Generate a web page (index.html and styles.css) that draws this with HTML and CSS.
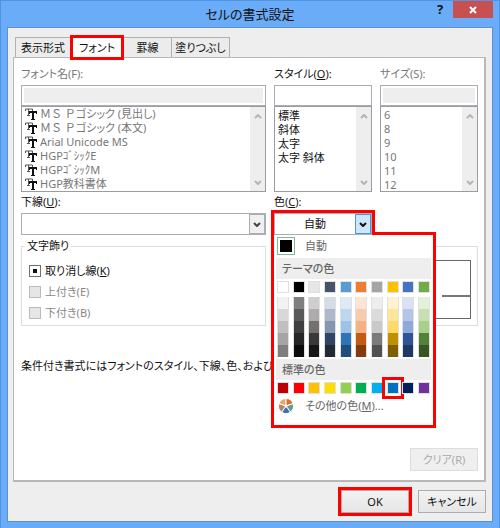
FILE: index.html
```
<!DOCTYPE html>
<html lang="ja">
<head>
    <meta charset="UTF-8">
    <meta name="viewport" content="width=device-width, initial-scale=1.0">
    <title>セルの書式設定</title>
    <link rel="stylesheet" href="styles.css">
</head>
<body>
    <svg width="0" height="0" class="defs" aria-hidden="true">
        <symbol id="tt" viewBox="0 0 12 12">
            <path d="M.5 3V1h7v2M3.5 1v6M2 7.5h3" fill="none" stroke="#555" stroke-width="1"/>
            <path d="M4 3h8v3h-1V5H9v6h1v1H6v-1h1V5H5v1H4z" fill="#111"/>
        </symbol>
        <symbol id="up" viewBox="0 0 8 5"><path d="M1 4l3-3 3 3" fill="none" stroke="#b4b4b4" stroke-width="2"/></symbol>
        <symbol id="down" viewBox="0 0 8 5"><path d="M1 1l3 3 3-3" fill="none" stroke="currentColor" stroke-width="2"/></symbol>
    </svg>

    <header class="titlebar">
        <h1>セルの書式設定</h1>
        <div class="title-buttons">
            <button type="button" class="help">?</button>
            <button type="button" class="close" aria-label="閉じる">
                <svg width="8" height="8" viewBox="0 0 8 8"><path d="M1 1l6 6M7 1L1 7" stroke="#fff" stroke-width="2"/></svg>
            </button>
        </div>
    </header>

    <main class="dialog">
        <nav class="tabs">
            <button type="button">表示形式</button>
            <button type="button" class="active">フォント</button>
            <button type="button" class="tab-border">罫線</button>
            <button type="button" class="tab-fill">塗りつぶし</button>
        </nav>

        <section class="panel">
            <div class="columns">
                <div class="field disabled">
                    <label for="fontName">フォント名(F):</label>
                    <input type="text" id="fontName" disabled>
                    <div class="listbox">
                        <ul role="listbox">
                            <li><svg><use href="#tt"/></svg><span class="wide">ＭＳ Ｐ</span>ゴシック (見出し)</li>
                            <li><svg><use href="#tt"/></svg><span class="wide">ＭＳ Ｐ</span>ゴシック (本文)</li>
                            <li><svg><use href="#tt"/></svg>Arial Unicode MS</li>
                            <li><svg><use href="#tt"/></svg>HGPｺﾞｼｯｸE</li>
                            <li><svg><use href="#tt"/></svg>HGPｺﾞｼｯｸM</li>
                            <li><svg><use href="#tt"/></svg>HGP教科書体</li>
                        </ul>
                        <div class="scrollbar"><svg><use href="#up"/></svg><svg><use href="#down"/></svg></div>
                    </div>
                </div>
                <div class="field">
                    <label for="fontStyle">スタイル(<u>O</u>):</label>
                    <input type="text" id="fontStyle">
                    <div class="listbox">
                        <select size="6" aria-label="スタイル">
                            <option>標準</option>
                            <option>斜体</option>
                            <option>太字</option>
                            <option>太字 斜体</option>
                        </select>
                        <div class="scrollbar"><svg><use href="#up"/></svg><svg><use href="#down"/></svg></div>
                    </div>
                </div>
                <div class="field disabled">
                    <label for="fontSize">サイズ(S):</label>
                    <input type="text" id="fontSize" disabled>
                    <div class="listbox">
                        <select size="6" aria-label="サイズ" disabled>
                            <option>6</option>
                            <option>8</option>
                            <option>9</option>
                            <option>10</option>
                            <option>11</option>
                            <option>12</option>
                        </select>
                        <div class="scrollbar"><svg><use href="#up"/></svg><svg><use href="#down"/></svg></div>
                    </div>
                </div>
            </div>

            <div class="columns second">
                <div class="field">
                    <label for="underline">下線(<u>U</u>):</label>
                    <div class="combo">
                        <select id="underline"><option></option></select>
                        <span class="arrow"><svg><use href="#down"/></svg></span>
                    </div>
                </div>
                <div class="field color-field">
                    <label for="color">色(<u>C</u>):</label>
                    <div class="combo color-combo">
                        <select id="color"><option>自動</option></select>
                        <span class="arrow"><svg><use href="#down"/></svg></span>
                    </div>
                    <div class="color-menu">
                        <button type="button" class="menu-row"><span class="auto-swatch"></span>自動</button>
                        <h2>テーマの色</h2>
                        <div class="swatches" id="theme"></div>
                        <div class="swatches shades" id="shades"></div>
                        <h2>標準の色</h2>
                        <div class="swatches" id="standard"></div>
                        <button type="button" class="menu-row more">
                            <svg class="wheel" viewBox="-8 -8 16 16" stroke="#fff" stroke-width="1">
                                <path d="M0 0L-7.1-2.3A7.5 7.5 0 0 1 0-7.5z" fill="#eda765"/>
                                <path d="M0 0L0-7.5A7.5 7.5 0 0 1 7.1-2.3z" fill="#d9713c"/>
                                <path d="M0 0L7.1-2.3A7.5 7.5 0 0 1 4.4 6.1z" fill="#5fa08c"/>
                                <path d="M0 0L4.4 6.1A7.5 7.5 0 0 1-4.4 6.1z" fill="#3a74b8"/>
                                <path d="M0 0L-4.4 6.1A7.5 7.5 0 0 1-7.1-2.3z" fill="#b9806a"/>
                                <circle r="1" fill="#fff"/>
                            </svg>
                            <span>その他の色(<u>M</u>)...</span>
                        </button>
                    </div>
                </div>
            </div>

            <div class="columns groups">
                <fieldset>
                    <legend>文字飾り</legend>
                    <label><input type="checkbox" class="mixed">取り消し線(<u>K</u>)</label>
                    <label class="off"><input type="checkbox" disabled>上付き(E)</label>
                    <label class="off"><input type="checkbox" disabled>下付き(B)</label>
                </fieldset>
                <fieldset class="preview">
                    <div class="preview-box"><span></span></div>
                </fieldset>
            </div>

            <p class="note">条件付き書式にはフォントのスタイル、下線、色、および取り消し線が設定できます。</p>
            <button type="button" class="btn clear" disabled>クリア(R)</button>
        </section>

        <footer class="actions">
            <div class="mark"><button type="button" class="btn">OK</button></div>
            <button type="button" class="btn">キャンセル</button>
        </footer>
    </main>
    <script src="script.js"></script>
</body>
</html>
```
FILE: styles.css
```
* {
    box-sizing: border-box;
}
body {
    font-family: "Noto Sans", "Noto Sans CJK JP", sans-serif;
    font-feature-settings: "palt";
    font-size: 11px;
    line-height: 14px;
    color: #111;
    margin: 0;
    padding: 0 6px 6px 6px;
    background: #6aacf8;
    border: 1px solid #4f94e4;
    border-bottom-width: 0;
    display: flex;
    flex-direction: column;
    min-height: 100vh;
}
button, input, select {
    font: inherit;
    font-feature-settings: inherit;
    color: inherit;
    margin: 0;
    padding: 0;
    border: none;
    border-radius: 0;
}
u {
    text-underline-offset: 1px;
}
.defs {
    position: absolute;
}

/* title bar */
.titlebar {
    display: grid;
    grid-template-columns: 1fr auto 1fr;
    height: 26px;
}
.titlebar h1 {
    grid-column: 2;
    margin: 0;
    font-size: 13px;
    font-weight: 400;
    line-height: 26px;
}
.title-buttons {
    display: flex;
    justify-content: flex-end;
    align-items: flex-start;
}
.help {
    background: none;
    width: 26px;
    height: 16px;
    font-size: 13px;
    font-weight: 700;
    line-height: 16px;
    text-align: center;
}
.close {
    display: flex;
    align-items: center;
    justify-content: center;
    width: 40px;
    height: 17px;
    background: #c75050;
}
.dialog {
    flex: 1;
    display: flex;
    flex-direction: column;
    background: #eee;
    border: 1px solid #5c93cf;
    padding: 7px 6px 5px 5px;
}

/* tabs */
.tabs {
    display: flex;
    align-items: flex-end;
    padding-left: 2px;
    height: 22px;
}
.tabs button {
    width: 56px;
    height: 20px;
    background: #ececec;
    border: 1px solid #b0b0b0;
    border-bottom: none;
}
.tabs .active {
    position: relative;
    z-index: 1;
    width: 54px;
    height: 25px;
    margin: 0 0 -3px -1px;
    background: #fff;
    border: 3px solid #f00;
}
.tabs .tab-border {
    width: 48px;
    border-left: none;
}
.tabs .tab-fill {
    width: 58px;
    border-left: none;
}

/* panel */
.panel {
    flex: 1;
    display: flex;
    flex-direction: column;
    background: #fff;
    border: 1px solid #b8b8b8;
    border-width: 1px 2px 2px 1px;
    padding: 7px 6px 9px 7px;
}
.columns {
    display: grid;
    grid-template-columns: 5fr 2fr 2fr;
    gap: 8px;
}
.field {
    display: flex;
    flex-direction: column;
    min-width: 0;
}
.field > label {
    line-height: 18px;
    margin-bottom: 2px;
}
.field input {
    width: 100%;
    height: 21px;
    border: 1px solid #abadb3;
    background: #fff;
}
.field input:disabled {
    background: #eee;
    border: 1px solid #abadb3;
    box-shadow: inset 0 0 0 2px #fff;
}
.disabled {
    color: #777;
}
.listbox {
    display: flex;
    height: 86px;
    border: 1px solid #9a9ca4;
    background: #fff;
}
.listbox ul, .listbox select {
    flex: 1;
    min-width: 0;
    margin: 0;
    padding: 0 0 0 3px;
    list-style: none;
    background: none;
    scrollbar-width: none;
    opacity: 1;
}
.listbox option {
    padding: 0;
    height: 14px;
    min-height: 14px;
    line-height: 14px;
}
.disabled option {
    color: #777;
}
.listbox li {
    display: flex;
    align-items: center;
    height: 14px;
    white-space: pre;
}
.listbox li svg {
    width: 12px;
    height: 12px;
    margin-right: 3px;
}
.wide {
    font-feature-settings: normal;
}
.scrollbar {
    display: flex;
    flex-direction: column;
    justify-content: space-between;
    align-items: center;
    width: 15px;
    padding: 7px 0 6px;
    background: #eee;
    color: #b4b4b4;
}
.scrollbar svg, .arrow svg {
    width: 8px;
    height: 5px;
}

/* drop-downs */
.second {
    margin-top: 1px;
}
.combo {
    display: flex;
    height: 22px;
    border: 1px solid #abadb3;
    background: #fff;
}
.combo select {
    flex: 1;
    min-width: 0;
    appearance: none;
    background: none;
}
.arrow {
    display: flex;
    align-items: center;
    justify-content: center;
    width: 16px;
    border: 1px solid #abadb3;
    background: #f0f0f0;
    color: #444;
}
.color-field {
    position: relative;
}
.color-combo {
    position: relative;
    z-index: 3;
    outline: 3px solid #f00;
    clip-path: inset(-3px -3px 0 -3px);
}
.color-combo select {
    padding-left: 29px;
}
.color-combo .arrow {
    background: #cde6f9;
    border-color: #4a98dc;
    color: #111;
}

/* colour menu */
.color-menu {
    position: absolute;
    z-index: 2;
    top: 39px;
    left: -3px;
    width: 165px;
    padding: 1px 2px 7px;
    background: #fff;
    border: 3px solid #f00;
    color: #666;
}
.color-menu h2 {
    margin: 0;
    padding-left: 6px;
    font-size: 11px;
    font-weight: 500;
    line-height: 21px;
    background: #eee;
}
.menu-row {
    display: flex;
    align-items: center;
    width: 100%;
    height: 20px;
    margin-bottom: 2px;
    background: none;
}
.auto-swatch {
    width: 18px;
    height: 18px;
    margin: 0 10px 0 1px;
    background: #000;
    border: 1px solid #7dbb97;
    box-shadow: inset 0 0 0 2px #fff;
}
.swatches {
    display: flex;
    justify-content: space-between;
    padding: 2px 1px;
}
.swatches button {
    display: block;
    width: 12px;
    height: 12px;
    border: 1px solid #e0e0e0;
}
.swatches .picked {
    outline: 3px solid #f00;
    outline-offset: 2px;
}
.shades .shade-column {
    border: 1px solid #e0e0e0;
    border-width: 0 1px;
}
.shades button {
    width: 10px;
    border: none;
}
.wheel {
    width: 16px;
    height: 16px;
    margin: 0 11px 0 2px;
}

/* groups */
.groups {
    margin-top: 4px;
}
fieldset {
    margin: 0;
    padding: 7px 7px 2px;
    min-width: 0;
    border: 1px solid #ddd;
}
fieldset legend {
    margin-left: -4px;
    padding: 0 2px;
}
fieldset label {
    display: flex;
    align-items: center;
    height: 21px;
}
input[type="checkbox"] {
    appearance: none;
    width: 12px;
    height: 12px;
    margin-right: 4px;
    border: 1px solid #707070;
    background: #fff;
}
input.mixed {
    background: #111;
    box-shadow: inset 0 0 0 3px #fff;
}
input[type="checkbox"]:disabled {
    border-color: #bbb;
    background: #e6e6e6;
}
.off {
    color: #888;
}
.preview {
    grid-column: 2 / 4;
    display: flex;
    margin-top: 7px;
    padding: 13px 6px 6px;
}
.preview-box {
    flex: 1;
    display: flex;
    align-items: center;
    border: 1px solid #666;
}
.preview-box span {
    width: 28px;
    height: 2px;
    margin: 12px 0 0 auto;
    background: #777;
}

.note {
    margin: 33px 0 0;
    white-space: nowrap;
}
.btn {
    width: 68px;
    height: 23px;
    border: 1px solid #acacac;
    background: linear-gradient(#f2f2f2, #e6e6e6);
}
.clear {
    margin: auto 0 0 auto;
    border-color: #ddd;
    background: #efefef;
    color: #aaa;
}
.actions {
    display: flex;
    justify-content: flex-end;
    align-items: center;
    gap: 6px;
    margin-top: 5px;
}
.mark {
    display: flex;
    border: 3px solid #f00;
}
```
FILE: script.js
```
const theme = ['#ffffff', '#000000', '#e7e6e6', '#44546a', '#5b9bd5', '#ed7d31', '#a5a5a5', '#ffc000', '#4472c4', '#70ad47'];
const shades = [
    ['#f2f2f2', '#d8d8d8', '#bfbfbf', '#a5a5a5', '#7f7f7f'],
    ['#7f7f7f', '#595959', '#3f3f3f', '#262626', '#0c0c0c'],
    ['#d0cece', '#aeabab', '#757070', '#3a3838', '#171616'],
    ['#d6dce4', '#adb9ca', '#8496b0', '#2f4566', '#222a35'],
    ['#deebf6', '#bdd7ee', '#9cc3e5', '#2e75b5', '#1e4e79'],
    ['#fbe5d5', '#f7cbac', '#f4b183', '#c55a11', '#833c0b'],
    ['#ededed', '#dbdbdb', '#c9c9c9', '#7b7b7b', '#525252'],
    ['#fff2cc', '#fee599', '#ffd965', '#bf9000', '#7f6000'],
    ['#d9e2f3', '#b4c6e7', '#8eaadb', '#2f5496', '#1f3864'],
    ['#e2efd9', '#c5e0b3', '#a8d08d', '#538135', '#375623']
];
const standard = ['#c00000', '#ff0000', '#ffc000', '#ffdd00', '#92d050', '#00b050', '#00b0f0', '#0070c0', '#002060', '#7030a0'];

function addSwatch(parent, color) {
    const button = document.createElement('button');
    button.type = 'button';
    button.style.background = color;
    button.setAttribute('aria-label', color);
    parent.appendChild(button);
    return button;
}

theme.forEach(color => addSwatch(document.getElementById('theme'), color));

shades.forEach(colors => {
    const column = document.createElement('div');
    column.className = 'shade-column';
    colors.forEach(color => addSwatch(column, color));
    document.getElementById('shades').appendChild(column);
});

standard.forEach(color => {
    const button = addSwatch(document.getElementById('standard'), color);
    if (color === '#0070c0') button.className = 'picked';
});
```
